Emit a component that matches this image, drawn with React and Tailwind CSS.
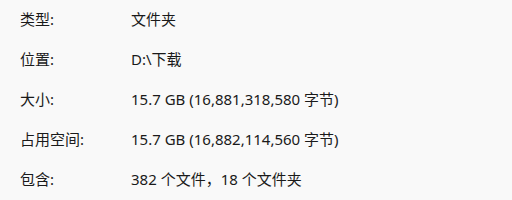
export default function App() {
  const rows = [
    ["类型:", "文件夹"],
    ["位置:", "D:\\下载"],
    ["大小:", "15.7 GB (16,881,318,580 字节)"],
    ["占用空间:", "15.7 GB (16,882,114,560 字节)"],
    ["包含:", "382 个文件，18 个文件夹"],
  ];
  return (
    <div
      className="w-[512px] h-[200px] overflow-hidden bg-[#f9f9f9] text-[#1a1a1a] text-[15px] leading-[20px] flex flex-col pt-[9px]"
      style={{ fontFamily: '"Noto Sans", "Noto Sans CJK SC", sans-serif' }}
    >
      {rows.map(([k, v]) => (
        <div key={k} className="flex shrink-0 h-[40px] items-start pl-[20px]">
          <div className="w-[111px]">{k}</div>
          <div>{v}</div>
        </div>
      ))}
    </div>
  );
}
